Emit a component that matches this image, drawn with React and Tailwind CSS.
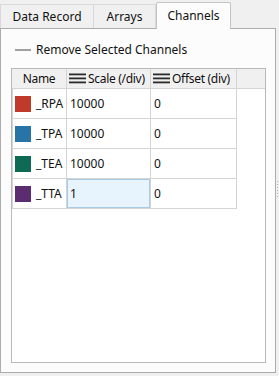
import React from "react";

const rows = [
  { name: "_RPA", swatch: "bg-[#c0392b]", scale: "10000", offset: "0" },
  { name: "_TPA", swatch: "bg-[#2874a6]", scale: "10000", offset: "0" },
  { name: "_TEA", swatch: "bg-[#0f6a55]", scale: "10000", offset: "0" },
  { name: "_TTA", swatch: "bg-[#5b2c6f]", scale: "1", offset: "0", selected: true },
];

const Lines = () => (
  <svg width="17" height="12" viewBox="0 0 17 12" className="shrink-0">
    <rect x="0" y="0.5" width="17" height="1.8" fill="#2b2b2b" />
    <rect x="0" y="4.5" width="17" height="1.8" fill="#2b2b2b" />
    <rect x="0" y="8.5" width="17" height="1.8" fill="#2b2b2b" />
  </svg>
);

const App = () => {
  return (
    <div className="w-[279px] h-[376px] bg-[#f0f0f0] flex flex-col font-['Noto_Sans',sans-serif] text-[12px] text-[#111] leading-none overflow-hidden">
      {/* tab strip */}
      <div className="flex items-end h-[28px] relative z-10">
        <div className="w-[94px] h-[24px] border-l border-t border-r border-[#d9d9d9] bg-[#f0f0f0] flex items-center justify-center pt-[1px]">
          Data Record
        </div>
        <div className="w-[62px] h-[24px] border-t border-r border-[#d9d9d9] bg-[#f0f0f0] flex items-center justify-center pt-[1px]">
          Arrays
        </div>
        <div className="w-[75px] h-[27px] -mb-[1px] border-l border-t border-r border-[#c4c4c4] bg-[#fcfcfc] rounded-t-[2px] flex items-center justify-center pb-[1px]">
          Channels
        </div>
      </div>

      <div className="flex">
        {/* panel */}
        <div className="w-[276px] h-[345px] border border-[#adadad] bg-[#fcfcfc] flex flex-col">
          <div className="h-[20px] mt-[11px] ml-[14px] flex items-center gap-[5px]">
            <div className="w-[16px] h-[2px] bg-[#a0a0a0]" />
            <span>Remove Selected Channels</span>
          </div>

          {/* table */}
          <div className="ml-[10px] mt-[8px] w-[255px] h-[295px] border border-[#b9b9b9] bg-white flex flex-col">
            <div className="h-[20px] bg-[#f0f0f0] flex border-b border-[#d4d4d4] shrink-0 tracking-[-0.3px]">
              <div className="w-[55px] border-r border-[#d4d4d4] flex items-center justify-center">Name</div>
              <div className="w-[84px] border-r border-[#d4d4d4] flex items-center pl-[2px] gap-[2px] whitespace-nowrap">
                <Lines />
                <span>Scale (/div)</span>
              </div>
              <div className="w-[86px] border-r border-[#d4d4d4] flex items-center pl-[2px] gap-[2px] whitespace-nowrap">
                <Lines />
                <span>Offset (div)</span>
              </div>
            </div>
            <div className="flex flex-col w-[225px]">
              {rows.map((r) => (
                <div key={r.name} className="h-[30px] flex border-b border-[#d4d4d4]">
                  <div className="w-[55px] border-l border-r border-[#d4d4d4] flex items-center pl-[2px] gap-[5px]">
                    <div className={`w-[16px] h-[16px] ${r.swatch}`} />
                    <span>{r.name}</span>
                  </div>
                  <div className="w-[84px] border-r border-[#d4d4d4] flex">
                    {r.selected ? (
                      <div className="flex-1 bg-[#e8f4fd] border border-[#a9cbe6] flex items-center pl-[2px]">{r.scale}</div>
                    ) : (
                      <div className="flex-1 flex items-center pl-[3px]">{r.scale}</div>
                    )}
                  </div>
                  <div className="w-[86px] border-r border-[#d4d4d4] flex items-center pl-[3px]">{r.offset}</div>
                </div>
              ))}
            </div>
          </div>
        </div>

        {/* splitter grip */}
        <div className="flex-1 flex justify-center pt-[153px]">
          <div className="flex flex-col gap-[2px]">
            <div className="w-[1px] h-[1px] bg-[#b4b4b4]" />
            <div className="w-[1px] h-[1px] bg-[#b4b4b4]" />
            <div className="w-[1px] h-[1px] bg-[#b4b4b4]" />
            <div className="w-[1px] h-[1px] bg-[#b4b4b4]" />
            <div className="w-[1px] h-[1px] bg-[#b4b4b4]" />
            <div className="w-[1px] h-[1px] bg-[#b4b4b4]" />
          </div>
        </div>
      </div>
    </div>
  );
};

export default App;
